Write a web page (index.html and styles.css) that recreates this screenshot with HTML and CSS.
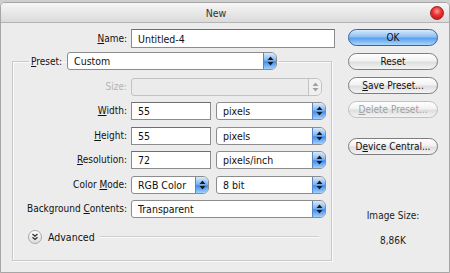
FILE: index.html
```html
<!DOCTYPE html>
<html lang="en">
<head>
<meta charset="UTF-8">
<title>New</title>
<link rel="stylesheet" href="styles.css">
</head>
<body>
<div class="window">
    <div class="titlebar">
        <span class="title">New</span>
        <span class="close"></span>
    </div>
    <div class="content">
        <div class="form">
            <div class="name-row">
                <label class="label"><u>N</u>ame:</label>
                <div class="input name-input">Untitled-4</div>
            </div>
            <fieldset class="group">
                <legend class="legend">
                    <label class="label-inline"><u>P</u>reset:</label>
                    <div class="select preset-select"><span class="value">Custom</span><span class="arrows"><svg width="7" height="10" viewBox="0 0 7 10"><path d="M3.5 0.5L6.5 4H0.5Z M3.5 9.5L6.5 6H0.5Z"/></svg></span></div>
                </legend>
                <div class="rows">
                    <label class="label disabled">Size:</label>
                    <div class="select size-select disabled-select"><span class="value"></span><span class="arrows"><svg width="7" height="10" viewBox="0 0 7 10"><path d="M3.5 0.5L6.5 4H0.5Z M3.5 9.5L6.5 6H0.5Z"/></svg></span></div>

                    <label class="label"><u>W</u>idth:</label>
                    <div class="pair">
                        <div class="input num-input">55</div>
                        <div class="select unit-select"><span class="value">pixels</span><span class="arrows"><svg width="7" height="10" viewBox="0 0 7 10"><path d="M3.5 0.5L6.5 4H0.5Z M3.5 9.5L6.5 6H0.5Z"/></svg></span></div>
                    </div>

                    <label class="label"><u>H</u>eight:</label>
                    <div class="pair">
                        <div class="input num-input">55</div>
                        <div class="select unit-select"><span class="value">pixels</span><span class="arrows"><svg width="7" height="10" viewBox="0 0 7 10"><path d="M3.5 0.5L6.5 4H0.5Z M3.5 9.5L6.5 6H0.5Z"/></svg></span></div>
                    </div>

                    <label class="label"><u>R</u>esolution:</label>
                    <div class="pair">
                        <div class="input num-input">72</div>
                        <div class="select unit-select"><span class="value">pixels/inch</span><span class="arrows"><svg width="7" height="10" viewBox="0 0 7 10"><path d="M3.5 0.5L6.5 4H0.5Z M3.5 9.5L6.5 6H0.5Z"/></svg></span></div>
                    </div>

                    <label class="label">Color <u>M</u>ode:</label>
                    <div class="pair">
                        <div class="select mode-select"><span class="value">RGB Color</span><span class="arrows"><svg width="7" height="10" viewBox="0 0 7 10"><path d="M3.5 0.5L6.5 4H0.5Z M3.5 9.5L6.5 6H0.5Z"/></svg></span></div>
                        <div class="select unit-select"><span class="value">8 bit</span><span class="arrows"><svg width="7" height="10" viewBox="0 0 7 10"><path d="M3.5 0.5L6.5 4H0.5Z M3.5 9.5L6.5 6H0.5Z"/></svg></span></div>
                    </div>

                    <label class="label">Background <u>C</u>ontents:</label>
                    <div class="select bg-select"><span class="value">Transparent</span><span class="arrows"><svg width="7" height="10" viewBox="0 0 7 10"><path d="M3.5 0.5L6.5 4H0.5Z M3.5 9.5L6.5 6H0.5Z"/></svg></span></div>
                </div>
                <div class="advanced">
                    <span class="expand"><svg width="8" height="8" viewBox="0 0 8 8"><path d="M1.5 1L4 3.2L6.5 1 M1.5 4.3L4 6.5L6.5 4.3" fill="none" stroke="#333" stroke-width="1.3"/></svg></span>
                    <span class="advanced-text">Advanced</span>
                    <span class="rule"></span>
                </div>
            </fieldset>
        </div>
        <div class="side">
            <div class="button ok">OK</div>
            <div class="button">Reset</div>
            <div class="button"><u>S</u>ave Preset...</div>
            <div class="button off"><u>D</u>elete Preset...</div>
            <div class="button central">D<u>e</u>vice Central...</div>
            <div class="size-info">
                <div>Image Size:</div>
                <div class="size-value">8,86K</div>
            </div>
        </div>
    </div>
</div>
</body>
</html>
```

FILE: styles.css
```css
body {
    margin: 0;
    padding: 0;
    background-color: #cfcfcf;
    font-family: "DejaVu Sans Condensed", "DejaVu Sans", sans-serif;
    font-size: 10px;
    color: #111;
}

u {
    text-decoration: underline;
    text-underline-offset: 1px;
}

.window {
    margin-top: 2px;
    width: 448px;
    height: 269px;
    background-color: #ececec;
    border: 1px solid #a6a6a6;
    border-radius: 5px 5px 0 0;
    overflow: hidden;
}

.titlebar {
    height: 19px;
    display: flex;
    align-items: center;
    justify-content: center;
    position: relative;
    background: linear-gradient(#f6f6f6, #dadada);
    border-bottom: 1px solid #b4b4b4;
}

.title {
    font-size: 10.5px;
    color: #333;
    margin-right: 18px;
}

.close {
    position: absolute;
    right: 5px;
    top: 3px;
    width: 12px;
    height: 12px;
    border-radius: 50%;
    border: 1px solid #a52020;
    background: radial-gradient(circle at 50% 35%, #ff9a9a 0, #e83030 45%, #b81010 100%);
}

.content {
    display: flex;
    padding-top: 6px;
}

.form {
    width: 339px;
}

.name-row {
    display: flex;
    align-items: center;
    height: 19px;
}

.label {
    display: block;
    text-align: right;
    white-space: nowrap;
    line-height: 18px;
}

.name-row .label {
    width: 126px;
    margin-right: 4px;
}

.input {
    box-sizing: border-box;
    background-color: #fff;
    border: 1px solid #8c8c8c;
    border-top-color: #6e6e6e;
    padding-left: 6px;
    display: flex;
    align-items: center;
    font-size: 10.5px;
}

.name-input {
    width: 204px;
    height: 19px;
}

.group {
    margin: 4px 0 0 11px;
    width: 320px;
    box-sizing: border-box;
    border: 1px solid #c9c9c9;
    box-shadow: inset 1px 1px 0 #fafafa, 1px 1px 0 #fafafa;
    padding: 8px 0 15px 0;
    min-width: 0;
}

.legend {
    display: flex;
    align-items: center;
    margin-left: 16px;
    padding: 0 2px;
    height: 18px;
}

.label-inline {
    margin-right: 5px;
}

.rows {
    display: grid;
    grid-template-columns: 114px auto;
    column-gap: 4px;
    row-gap: 6.4px;
    align-items: center;
}

.label.disabled {
    color: #b4b4b4;
}

.pair {
    display: flex;
    gap: 5px;
}

.num-input {
    width: 80px;
    height: 18px;
}

.select {
    box-sizing: border-box;
    height: 18px;
    display: flex;
    align-items: stretch;
    background-color: #fff;
    border: 1px solid #8c8c8c;
    border-radius: 3px 6px 6px 3px;
    font-size: 10.5px;
}

.select .value {
    flex: 1;
    display: flex;
    align-items: center;
    padding-left: 6px;
    white-space: nowrap;
}

.arrows {
    width: 12px;
    display: flex;
    align-items: center;
    justify-content: center;
    border-left: 1px solid #5b84c0;
    border-radius: 0 5px 5px 0;
    background: linear-gradient(#d8eafd, #7eb6f5 45%, #3f8ff0 55%, #9fd0ff);
}

.arrows svg path {
    fill: #1a1a1a;
}

.preset-select {
    width: 210px;
}

.size-select {
    width: 191px;
}

.disabled-select {
    background-color: #ebebeb;
    border-color: #c2c2c2;
}

.disabled-select .arrows {
    background: #f0f0f0;
    border-left-color: #c2c2c2;
}

.disabled-select .arrows svg path {
    fill: #a0a0a0;
}

.unit-select {
    width: 110px;
}

.mode-select {
    width: 78px;
}

.pair .mode-select + .unit-select {
    margin-left: 2px;
}

.bg-select {
    width: 195px;
}

.advanced {
    display: flex;
    align-items: center;
    margin-top: 11px;
    padding-left: 15px;
    height: 16px;
}

.expand {
    width: 14px;
    height: 14px;
    box-sizing: border-box;
    border-radius: 50%;
    border: 1px solid #a8a8a8;
    background: linear-gradient(#ffffff, #dcdcdc);
    display: flex;
    align-items: center;
    justify-content: center;
}

.advanced-text {
    margin-left: 6px;
    font-size: 10.5px;
}

.rule {
    flex: 1;
    margin: 0 12px 0 5px;
    border-top: 1px solid #cfcfcf;
    border-bottom: 1px solid #fafafa;
}

.side {
    margin-left: 8px;
    width: 90px;
    display: flex;
    flex-direction: column;
    gap: 7px;
}

.button {
    box-sizing: border-box;
    height: 17px;
    border: 1px solid #7d7d7d;
    border-radius: 9px;
    background: linear-gradient(#ffffff, #f2f2f2 45%, #dedede 55%, #f4f4f4);
    display: flex;
    align-items: center;
    justify-content: center;
    white-space: nowrap;
}

.button.ok {
    border-color: #3e5f9c;
    background: linear-gradient(#d6eafe, #8fc0f4 45%, #5d9fec 55%, #a8d6ff);
}

.button.off {
    color: #a0a0a0;
    border-color: #c0c0c0;
}

.button.central {
    margin-top: 13px;
}

.size-info {
    margin-top: 41px;
    text-align: center;
    line-height: 25px;
    color: #222;
}
```
